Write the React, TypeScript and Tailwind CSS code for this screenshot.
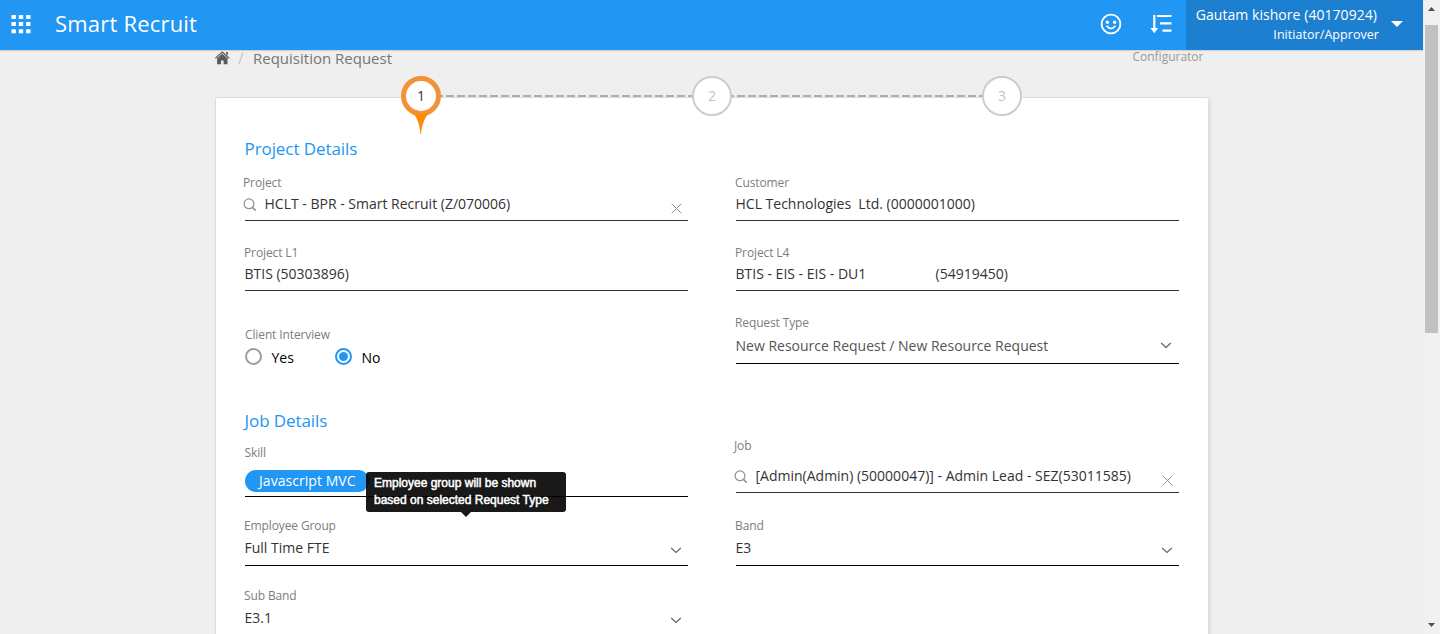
import type { ReactNode } from 'react';

function SearchIcon() {
  return (
    <svg className="-ml-[2px] mt-[2px] h-[14px] w-[14px] shrink-0" viewBox="0 0 14 14" fill="none" stroke="#949494" strokeWidth="1.3">
      <circle cx="6" cy="5.8" r="4.9" />
      <path d="M9.5 9.4 L12.7 12.6" strokeWidth="1.6" />
    </svg>
  );
}

function ClearIcon() {
  return (
    <svg className="mr-[6px] h-[11px] w-[11px] shrink-0 translate-y-[4px]" viewBox="0 0 11 11" fill="none" stroke="#8f8f8f" strokeWidth="1">
      <path d="M0.7 0.7 L10.3 10.3 M10.3 0.7 L0.7 10.3" />
    </svg>
  );
}

function ChevronIcon({ className }: { className: string }) {
  return (
    <svg className={'h-[7px] w-[12px] shrink-0 ' + className} viewBox="0 0 12 7" fill="none" stroke="currentColor">
      <path d="M1.2 1 L6 5.5 L10.8 1" />
    </svg>
  );
}

type FieldProps = {
  label: string;
  labelClass?: string;
  className: string;
  children: ReactNode;
};

function Field({ label, labelClass = 'mb-[3px] -ml-px', className, children }: FieldProps) {
  return (
    <div className={'flex flex-col justify-end border-b ' + className}>
      <div className={'h-4 text-[12px] leading-4 tracking-[-0.12px] text-[#7d7d7d] ' + labelClass}>{label}</div>
      <div className="-ml-[0.5px] flex h-5 items-center text-[14px] leading-5 text-[#333]">{children}</div>
    </div>
  );
}

function Title({ children }: { children: ReactNode }) {
  return <h2 className="-ml-[0.5px] h-6 text-[17px] leading-6 tracking-[-0.08px] text-[#2196f3]">{children}</h2>;
}

function Radio({ checked, label }: { checked?: boolean; label: string }) {
  return (
    <div className="flex w-[90px] items-center">
      <span
        className={
          'flex h-[17px] w-[17px] -translate-y-px items-center justify-center rounded-full border-2 ' +
          (checked ? 'border-[#2196f3]' : 'border-[#9e9e9e]')
        }
      >
        {checked && <span className="h-[9px] w-[9px] rounded-full bg-[#2196f3]" />}
      </span>
      <span className="ml-[9.5px] translate-y-px text-[14px] leading-5 text-black">{label}</span>
    </div>
  );
}

function Header() {
  return (
    <header className="z-10 flex h-[50px] shrink-0 items-center bg-[#2196f3] text-white shadow-[0_1px_1px_rgba(0,0,0,0.12)]">
      <svg className="ml-[11px] h-[20px] w-[20px]" viewBox="0 0 20 20" fill="white">
        {[0, 7, 14.3].map((y) => [0.5, 7.8, 15.1].map((x) => <rect key={x + '-' + y} x={x} y={y} width="4.4" height="4" />))}
      </svg>
      <h1 className="ml-[24px] pb-[3px] text-[22px] leading-[47px] tracking-[0.2px]">Smart Recruit</h1>
      <svg className="ml-auto h-[22px] w-[22px] -translate-y-px" viewBox="0 0 22 22" fill="none" stroke="white" strokeWidth="1.9">
        <circle cx="11" cy="11" r="9.4" />
        <path d="M6.5 12.8 Q11 18.2 15.5 12.8" strokeWidth="1.7" />
        <circle cx="7.4" cy="9.2" r="1.7" fill="white" stroke="none" />
        <circle cx="14.6" cy="9.2" r="1.7" fill="white" stroke="none" />
      </svg>
      <svg className="ml-[28px] h-[20px] w-[22px] -translate-y-px" viewBox="0 0 22 20" fill="none" stroke="white" strokeWidth="2">
        <path d="M4.3 1 V15 M7 2 H21.5 M10 9.3 H21.5 M12.5 16.6 H21.5" strokeWidth="2.2" />
        <path d="M0.3 14 H8.2 L4.3 19.2 Z" fill="white" stroke="none" />
      </svg>
      <div className="ml-[14px] flex h-[50px] w-[237px] items-center bg-[#1d7fcf]">
        <div className="flex w-[193px] flex-col items-end pb-px">
          <span className="-mt-px mb-px mr-[2px] text-[14px] leading-[20px] tracking-[0.05px]">Gautam kishore (40170924)</span>
          <span className="text-[12.5px] leading-[18px] tracking-[0.05px]">Initiator/Approver</span>
        </div>
        <svg className="ml-[12px] h-[6px] w-[12px] -translate-y-px" viewBox="0 0 12 6" fill="white">
          <path d="M0 0 H12 L6 6 Z" />
        </svg>
      </div>
    </header>
  );
}

function Breadcrumb() {
  return (
    <div className="ml-[215px] flex h-[47px] w-[988.5px] shrink-0 items-start">
      <svg className="mt-px h-[14px] w-[15px]" viewBox="0 0 15 14">
        <path d="M0.4 7.3 L7.3 1 L14.2 7.3" fill="none" stroke="#5c5c5c" strokeWidth="1.2" />
        <path d="M11.1 1 H12.8 V4.6 L11.1 3.1 Z M2.1 7.2 L7.3 2.7 L12.5 7.2 V13.2 H8.6 V9.4 H6 V13.2 H2.1 Z" fill="#5c5c5c" />
      </svg>
      <svg className="ml-[8px] mt-[2px] h-[13px] w-[6px]" viewBox="0 0 6 13" stroke="#c8c8c8" strokeWidth="1.3">
        <path d="M1 12 L5 0.5" />
      </svg>
      <span className="-mt-px ml-[9px] text-[15px] leading-[18px] text-[#757575]">Requisition Request</span>
      <span className="ml-auto text-[12px] leading-[14px] text-[#999]">Configurator</span>
    </div>
  );
}

function Dashes({ className }: { className: string }) {
  return (
    <svg className={'h-[2px] ' + className} fill="none">
      <path d="M-6 1 H260" stroke="#adadad" strokeWidth="2" strokeDasharray="8 3" />
    </svg>
  );
}

function Stepper() {
  return (
    <div className="relative -mt-[22px] ml-[185px] flex h-10 items-center text-[14px]">
      <div className="relative flex h-10 w-10 items-center justify-center rounded-full border-[5px] border-[#f29337] bg-white pb-[2px] text-[#333]">
        1
        <svg className="absolute left-[5px] top-[30px] h-[24px] w-[20px]" viewBox="0 0 20 24">
          <path d="M0 0 Q10 6 20 0 C14 5 10.8 14 10 23 H9.4 C8.8 14 6 5 0 0 Z" fill="#ff8b05" />
        </svg>
      </div>
      <Dashes className="w-[251px]" />
      <div className="flex h-10 w-10 items-center justify-center rounded-full border-2 border-[#ccc] bg-white pb-[2px] text-[#c4c4c4]">2</div>
      <Dashes className="w-[250px]" />
      <div className="flex h-10 w-10 items-center justify-center rounded-full border-2 border-[#ccc] bg-white pb-[2px] text-[#c4c4c4]">3</div>
    </div>
  );
}

function Tooltip() {
  return (
    <div className="absolute left-[121px] top-[39px] z-10 flex w-[200px] flex-col items-center">
      <div className="h-10 w-full whitespace-nowrap rounded-[3px] bg-black/90 px-2 pt-[3px] font-['Liberation_Sans',Arial,sans-serif] text-[12px] leading-[17px] text-white [-webkit-text-stroke:0.5px_white]">
        Employee group will be shown
        <br />
        based on selected Request Type
      </div>
      <svg className="h-[5px] w-[10px]" viewBox="0 0 10 5">
        <path d="M0 0 H10 L5 5 Z" fill="rgba(0,0,0,0.9)" />
      </svg>
    </div>
  );
}

function Scrollbar() {
  return (
    <div className="flex h-full w-[17px] shrink-0 flex-col items-center bg-[#f1f1f1]">
      <svg className="mt-[7px] h-[4px] w-[7px] shrink-0" viewBox="0 0 7 4">
        <path d="M0 4 H7 L3.5 0 Z" fill="#505050" />
      </svg>
      <div className="mt-[14px] h-[308px] w-[13px] shrink-0 bg-[#c1c1c1]" />
      <svg className="mb-[7px] mt-auto h-[4px] w-[7px] shrink-0" viewBox="0 0 7 4">
        <path d="M0 0 H7 L3.5 4 Z" fill="#505050" />
      </svg>
    </div>
  );
}

export default function App() {
  return (
    <div className="flex h-[634px] w-full overflow-hidden bg-[#efefef] font-['Open_Sans','Noto_Sans',sans-serif]">
      <div className="flex min-w-0 flex-1 flex-col">
        <Header />
        <Breadcrumb />
        <main className="ml-[215px] h-[600px] w-[994px] shrink-0 rounded-[3px] border border-[#dcdcdc] bg-white shadow-[2px_2px_4px_rgba(0,0,0,0.06)]">
          <Stepper />
          <div className="mt-[21px] flex flex-col pl-[29px]">
            <Title>Project Details</Title>
            <div className="flex gap-12">
              <div className="flex w-[443px] flex-col">
                <Field label="Project" labelClass="mb-[3px] -ml-[2px]" className="h-[60px] border-[#333] pb-[6px]">
                  <SearchIcon />
                  <span className="ml-[8px] flex-1">HCLT - BPR - Smart Recruit (Z/070006)</span>
                  <ClearIcon />
                </Field>
                <Field label="Project L1" className="h-[70px] border-[#333] pb-[6px]">
                  BTIS (50303896)
                </Field>
                <div className="pt-[36px]">
                  <div className="h-4 text-[12px] leading-4 tracking-[-0.12px] text-[#7d7d7d]">Client Interview</div>
                  <div className="mt-[4px] flex">
                    <Radio label="Yes" />
                    <Radio label="No" checked />
                  </div>
                </div>
              </div>
              <div className="flex h-[248px] w-[443px] flex-col">
                <Field label="Customer" className="h-[60px] border-[#333] pb-[6px]">
                  <span className="whitespace-pre">{'HCL Technologies  Ltd. (0000001000)'}</span>
                </Field>
                <Field label="Project L4" className="h-[70px] border-[#333] pb-[6px]">
                  <span className="w-[200px]">BTIS - EIS - EIS - DU1</span>
                  <span>(54919450)</span>
                </Field>
                <Field label="Request Type" labelClass="mb-[5px] -ml-px" className="h-[73px] border-black pb-[7px]">
                  <span className="flex-1 text-[#555]">New Resource Request / New Resource Request</span>
                  <ChevronIcon className="mr-[7px] -translate-y-px stroke-[1.6] text-[#757575]" />
                </Field>
              </div>
            </div>
            <Title>Job Details</Title>
            <div className="relative flex gap-12">
              <div className="flex w-[443px] flex-col">
                <Field label="Skill" labelClass="mb-[10px] -ml-[0.5px]" className="h-[64px] border-black pb-[5px]">
                  <span className="ml-[0.5px] flex h-[22px] w-[124px] shrink-0 items-center rounded-full bg-[#2196f3] pl-[14px] tracking-[0.05px] text-white">
                    Javascript MVC
                  </span>
                </Field>
                <Field label="Employee Group" labelClass="mb-[4px] -ml-px" className="h-[69px] border-black pb-[7px]">
                  <span className="flex-1">Full Time FTE</span>
                  <ChevronIcon className="mr-[6px] translate-y-[2px] stroke-[1.2] text-[#666]" />
                </Field>
                <Field label="Sub Band" labelClass="mb-[4px] -ml-px" className="h-[70px] border-black pb-[7px]">
                  <span className="flex-1">E3.1</span>
                  <ChevronIcon className="mr-[6px] translate-y-[2px] stroke-[1.2] text-[#666]" />
                </Field>
              </div>
              <div className="flex w-[443px] flex-col">
                <Field label="Job" labelClass="mb-[12px] -ml-[2px]" className="h-[60px] border-[#333] pb-[6px]">
                  <SearchIcon />
                  <span className="ml-[8px] flex-1">[Admin(Admin) (50000047)] - Admin Lead - SEZ(53011585)</span>
                  <ClearIcon />
                </Field>
                <Field label="Band" labelClass="mb-[4px] -ml-px" className="h-[73px] border-black pb-[7px]">
                  <span className="flex-1">E3</span>
                  <ChevronIcon className="mr-[6px] translate-y-[2px] stroke-[1.2] text-[#666]" />
                </Field>
              </div>
              <Tooltip />
            </div>
          </div>
        </main>
      </div>
      <Scrollbar />
    </div>
  );
}
